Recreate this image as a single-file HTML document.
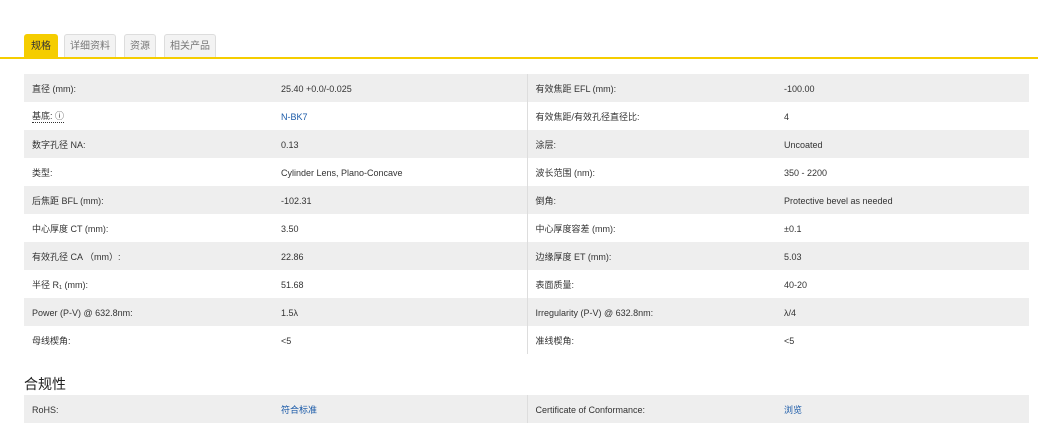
<!DOCTYPE html>
<html><head><meta charset="utf-8"><style>
*{margin:0;padding:0;box-sizing:border-box}
body{width:1038px;height:448px;background:#fff;font-family:"Liberation Sans","Noto Sans CJK SC",sans-serif;color:#333;position:relative;overflow:hidden}
.tab{position:absolute;top:34px;height:23px;font-size:10px;line-height:23px;text-align:center;border:1px solid #ddd;border-bottom:none;background:#f3f3f3;color:#777;border-radius:3px 3px 0 0}
.tab.on{background:#f5cd00;color:#333;border-color:#f5cd00}
.line{position:absolute;left:0;top:57px;width:1038px;height:2px;background:#f5cd00}
table{position:absolute;left:24px;width:1005px;border-collapse:collapse;font-size:9px;table-layout:fixed}
td{height:28px;line-height:28px;padding:0 0 0 8px;vertical-align:top;white-space:nowrap;overflow:hidden}
td span,td a{display:inline-block;line-height:12px;vertical-align:middle}
tr:nth-child(odd) td{background:#eeeeee}
col.a{width:249px}col.b{width:254px}col.c{width:249px}
td.l2{border-left:1px solid #ddd}
a{color:#1a5aa8;text-decoration:none}
h3{position:absolute;left:24px;top:374px;font-size:14px;font-weight:normal;color:#222}
</style></head><body>
<div class="tab on" style="left:24px;width:34px">规格</div>
<div class="tab" style="left:64px;width:52px">详细资料</div>
<div class="tab" style="left:124px;width:32px">资源</div>
<div class="tab" style="left:164px;width:52px">相关产品</div>
<div class="line"></div>
<table style="top:74px"><colgroup><col class="a"><col class="b"><col class="c"><col></colgroup>
<tr><td><span>直径 (mm):</span></td><td><span>25.40 +0.0/-0.025</span></td><td class="l2"><span>有效焦距 EFL (mm):</span></td><td><span>-100.00</span></td></tr>
<tr><td><span style="border-bottom:1px dotted #333">基底: ⓘ</span></td><td><a>N-BK7</a></td><td class="l2"><span>有效焦距/有效孔径直径比:</span></td><td><span>4</span></td></tr>
<tr><td><span>数字孔径 NA:</span></td><td><span>0.13</span></td><td class="l2"><span>涂层:</span></td><td><span>Uncoated</span></td></tr>
<tr><td><span>类型:</span></td><td><span>Cylinder Lens, Plano-Concave</span></td><td class="l2"><span>波长范围 (nm):</span></td><td><span>350 - 2200</span></td></tr>
<tr><td><span>后焦距 BFL (mm):</span></td><td><span>-102.31</span></td><td class="l2"><span>倒角:</span></td><td><span>Protective bevel as needed</span></td></tr>
<tr><td><span>中心厚度 CT (mm):</span></td><td><span>3.50</span></td><td class="l2"><span>中心厚度容差 (mm):</span></td><td><span>±0.1</span></td></tr>
<tr><td><span>有效孔径 CA （mm）:</span></td><td><span>22.86</span></td><td class="l2"><span>边缘厚度 ET (mm):</span></td><td><span>5.03</span></td></tr>
<tr><td><span>半径 R₁ (mm):</span></td><td><span>51.68</span></td><td class="l2"><span>表面质量:</span></td><td><span>40-20</span></td></tr>
<tr><td><span>Power (P-V) @ 632.8nm:</span></td><td><span>1.5λ</span></td><td class="l2"><span>Irregularity (P-V) @ 632.8nm:</span></td><td><span>λ/4</span></td></tr>
<tr><td><span>母线楔角:</span></td><td><span>&lt;5</span></td><td class="l2"><span>准线楔角:</span></td><td><span>&lt;5</span></td></tr>
</table>
<h3>合规性</h3>
<table style="top:395px"><colgroup><col class="a"><col class="b"><col class="c"><col></colgroup>
<tr><td><span>RoHS:</span></td><td><a>符合标准</a></td><td class="l2"><span>Certificate of Conformance:</span></td><td><a>浏览</a></td></tr>
</table>
</body></html>
